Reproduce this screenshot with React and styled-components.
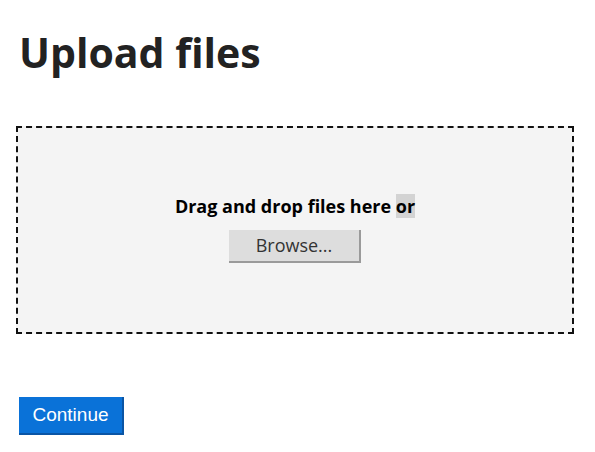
import React from "react";
import styled, { createGlobalStyle } from "styled-components";

const GlobalStyle = createGlobalStyle`
  html, body {
    margin: 0;
    padding: 0;
    background: #ffffff;
    font-family: "Open Sans", sans-serif;
    color: #1f1f1f;
  }
`;

const Page = styled.div`
  display: flex;
  flex-direction: column;
  align-items: flex-start;
  padding: 0 16px;
`;

const Title = styled.h1`
  margin: 24px 0 0 3px;
  font-size: 41px;
  font-weight: 700;
  line-height: 56px;
  color: #222222;
`;

const DropZone = styled.div`
  box-sizing: border-box;
  width: 558px;
  height: 208px;
  margin-top: 46px;
  padding-bottom: 4px;
  border: 2px dashed #111111;
  background: #f4f4f4;
  display: flex;
  flex-direction: column;
  align-items: center;
  justify-content: center;
  gap: 12px;
`;

const Prompt = styled.div`
  font-size: 18px;
  font-weight: 700;
  line-height: 24px;
  color: #000000;
`;

const Mark = styled.span`
  background: #d3d3d3;
`;

const BrowseButton = styled.button`
  box-sizing: border-box;
  width: 132px;
  height: 33px;
  padding: 0;
  background: #dddddd;
  border: none;
  border-right: 2px solid #9a9a9a;
  border-bottom: 2px solid #9a9a9a;
  font-family: "Open Sans", sans-serif;
  font-size: 18px;
  color: #333333;
  cursor: pointer;
`;

const ContinueButton = styled.button`
  box-sizing: border-box;
  margin: 63px 0 0 3px;
  width: 105px;
  height: 38px;
  padding: 0;
  background: #0a72d8;
  border: none;
  border-right: 2px solid #0a55a5;
  border-bottom: 2px solid #0a55a5;
  font-family: "Liberation Sans", Arial, sans-serif;
  font-size: 19px;
  color: #ffffff;
  cursor: pointer;
`;

export default function App() {
  return (
    <>
      <GlobalStyle />
      <Page>
        <Title>Upload files</Title>
        <DropZone>
          <Prompt>
            Drag and drop files here <Mark>or</Mark>
          </Prompt>
          <BrowseButton>Browse...</BrowseButton>
        </DropZone>
        <ContinueButton>Continue</ContinueButton>
      </Page>
    </>
  );
}
